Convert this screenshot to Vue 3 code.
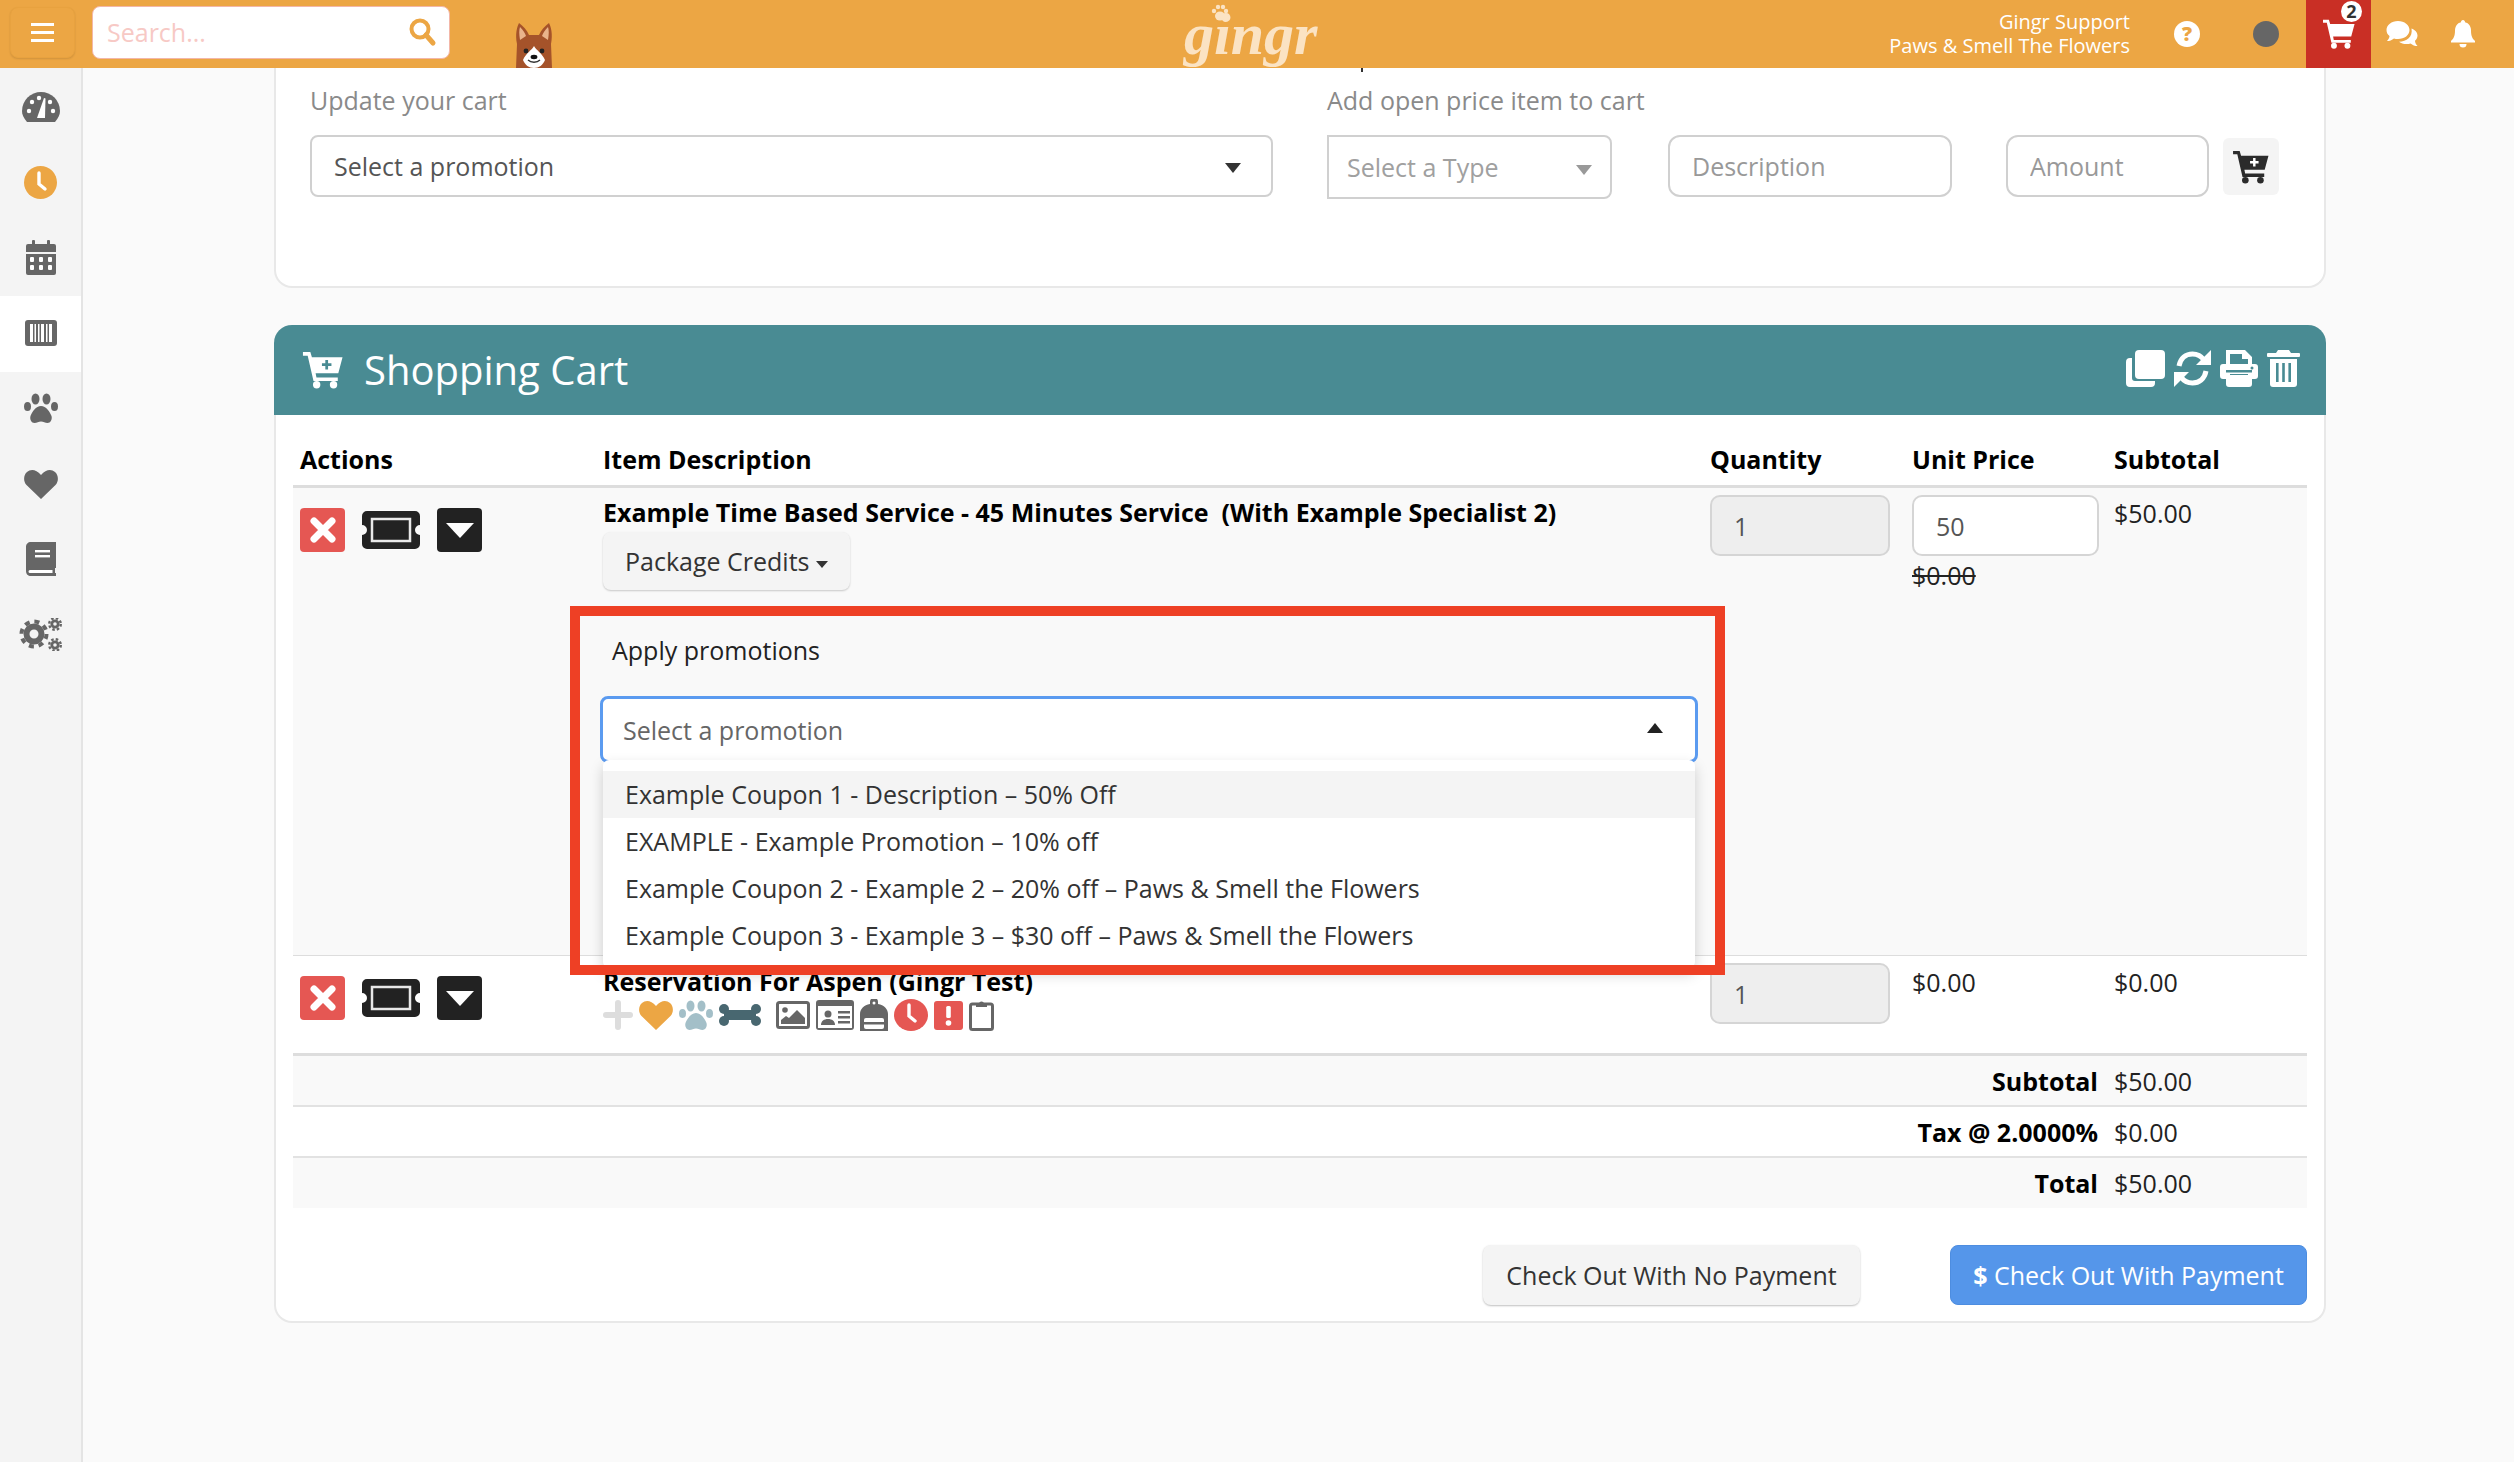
<script setup>
const promos = [
  "Example Coupon 1 - Description – 50% Off",
  "EXAMPLE - Example Promotion – 10% off",
  "Example Coupon 2 - Example 2 – 20% off – Paws & Smell the Flowers",
  "Example Coupon 3 - Example 3 – $30 off – Paws & Smell the Flowers",
];
const totals = [
  { label: "Subtotal", value: "$50.00" },
  { label: "Tax @ 2.0000%", value: "$0.00" },
  { label: "Total", value: "$50.00" },
];
</script>

<template>
  <div class="page">
    <header class="topbar">
      <button class="menu-btn"><i></i><i></i><i></i></button>
      <div class="search">
        <input placeholder="Search..." />
        <svg width="30" height="30" viewBox="0 0 30 30">
          <circle cx="13" cy="12" r="8.5" fill="none" stroke="#eca644" stroke-width="4" />
          <path d="M19 18l7 8" stroke="#eca644" stroke-width="5" stroke-linecap="round" />
        </svg>
      </div>
      <svg class="dog" width="40" height="46" viewBox="0 0 40 46">
        <path d="M3 22C1 12 3 5 5 1c4 3 8 7 10 12h10c2-5 6-9 10-12 2 4 4 11 2 21l1 24H2z" fill="#a5532a" />
        <path d="M6 18C5 12 5 8 6 5c3 3 5 6 6 9zM34 18c1-6 1-10 0-13-3 3-5 6-6 9z" fill="#eab48b" />
        <path d="M20 24c-2 4-8 7-11 14 2 5 6 8 11 8s9-3 11-8c-3-7-9-10-11-14z" fill="#fff" />
        <circle cx="12" cy="29" r="2.4" fill="#222" />
        <circle cx="28" cy="29" r="2.4" fill="#222" />
        <ellipse cx="20" cy="35" rx="3.4" ry="2.2" fill="#111" />
        <path d="M14 38c3 3 9 3 12 0" fill="none" stroke="#333" stroke-width="1.3" />
      </svg>
      <div class="logo">
        <svg class="logo-paw" width="20" height="20" viewBox="0 0 20 20" fill="#fbe3c3">
          <ellipse cx="10" cy="14" rx="5" ry="4.5" />
          <circle cx="4" cy="9" r="2.2" /><circle cx="8" cy="5" r="2.2" /><circle cx="13" cy="5" r="2.2" /><circle cx="16" cy="9" r="2.2" />
        </svg>
        gingr
      </div>
      <div class="top-right">
        <div class="user">
          <div>Gingr Support</div>
          <div>Paws &amp; Smell The Flowers</div>
        </div>
        <div class="help">?</div>
        <div class="status-dot"></div>
        <div class="cart-tab">
          <svg width="32" height="34" viewBox="0 0 38 36">
            <path d="M0 1h7l1.500 5h29l-4 15H12l.8 4H33v3.500H10L4.500 4.500H0z" fill="#fff" />
            <circle cx="13" cy="32" r="3.500" fill="#fff" /><circle cx="29" cy="32" r="3.500" fill="#fff" />
          </svg>
          <span class="badge">2</span>
        </div>
        <svg class="comments" width="32" height="28" viewBox="0 0 32 28" fill="#fff">
          <path d="M12 1c6.500 0 11.500 4 11.500 9s-5 9-11.500 9c-1.500 0-3-.2-4-.6C6 20 3.500 21 1 21c1.500-1.500 2.500-3.500 2.500-5C1.500 14.500.5 12.500.5 10 .5 5 5.500 1 12 1z" />
          <path d="M25.500 8.500c3.500 1.200 6 4 6 7 0 2-1 4-2.500 5.300 0 1.700 1 3.700 2.500 5.200-2.500 0-5-1-7-2.600-1 .4-2.500.6-4 .6-3 0-5.500-.8-7.500-2.300 7.500 0 14-4.500 12.500-13.200z" />
        </svg>
        <svg class="bell" width="24" height="28" viewBox="0 0 24 28" fill="#fff">
          <path d="M12 0c1.300 0 2 1 2 2.200C18 3 20 6.500 20 10.500c0 6 1.500 8 4 10.500v1.500H0V21c2.500-2.500 4-4.500 4-10.500C4 6.500 6 3 10 2.200 10 1 10.700 0 12 0z" />
          <path d="M8.500 24h7a3.500 3.500 0 0 1-7 0z" />
        </svg>
      </div>
    </header>

    <div class="layout">
      <aside class="sidebar">
        <div class="side-item">
          <svg width="38" height="30" viewBox="0 0 38 30">
            <path d="M5 30C1.500 26 0 22.500 0 19a19 19 0 0 1 38 0c0 3.500-1.500 7-5 11z" fill="#666" />
            <circle cx="7" cy="19" r="2.200" fill="#fff" /><circle cx="10" cy="10" r="2.200" fill="#fff" /><circle cx="31" cy="19" r="2.200" fill="#fff" /><circle cx="28" cy="10" r="2.200" fill="#fff" /><circle cx="17" cy="6" r="2.200" fill="#fff" />
            <path d="M15 26l7-20 1.500.5L23 26z" fill="#fff" />
          </svg>
        </div>
        <div class="side-item">
          <svg width="33" height="33" viewBox="0 0 33 33">
            <circle cx="16.500" cy="16.500" r="16.500" fill="#eca644" />
            <path d="M15 7v11l6 5" fill="none" stroke="#fff" stroke-width="3.400" stroke-linecap="round" />
          </svg>
        </div>
        <div class="side-item">
          <svg width="30" height="35" viewBox="0 0 30 35" fill="#666">
            <rect x="6" width="3" height="6" rx="1" /><rect x="21" width="3" height="6" rx="1" />
            <path d="M2 4h26a2 2 0 0 1 2 2v6H0V6a2 2 0 0 1 2-2z" />
            <path d="M0 14h30v19a2 2 0 0 1-2 2H2a2 2 0 0 1-2-2z" />
            <g fill="#fff"><rect x="4" y="17" width="4" height="5" rx="1" /><rect x="13" y="17" width="4" height="5" rx="1" /><rect x="22" y="17" width="4" height="5" rx="1" /><rect x="4" y="25" width="4" height="5" rx="1" /><rect x="13" y="25" width="4" height="5" rx="1" /><rect x="22" y="25" width="4" height="5" rx="1" /></g>
          </svg>
        </div>
        <div class="side-item active">
          <svg width="32" height="26" viewBox="0 0 32 26">
            <rect width="32" height="26" rx="3" fill="#666" />
            <g fill="#fff"><rect x="5" y="4" width="3" height="18" /><rect x="9.500" y="4" width="1.500" height="18" /><rect x="13" y="4" width="1.500" height="18" /><rect x="16" y="4" width="3" height="18" /><rect x="21" y="4" width="1.500" height="18" /><rect x="24" y="4" width="3" height="18" /></g>
          </svg>
        </div>
        <div class="side-item">
          <svg width="34" height="30" viewBox="0 0 34 30" fill="#666">
            <ellipse cx="11.500" cy="6" rx="4" ry="5.500" /><ellipse cx="22.500" cy="6" rx="4" ry="5.500" />
            <ellipse cx="3.500" cy="13.500" rx="3.500" ry="4.500" /><ellipse cx="30.500" cy="13.500" rx="3.500" ry="4.500" />
            <path d="M17 13c5 0 9 6 10.500 10 1 3.500-1 7-4 7-2.500 0-4-1.500-6.500-1.500S13 30 10.500 30c-3 0-5-3.500-4-7C8 19 12 13 17 13z" />
          </svg>
        </div>
        <div class="side-item">
          <svg width="34" height="30" viewBox="0 0 34 30">
            <path d="M17 30L2.500 16C-1 12-.5 6 3 3c3.500-3 9-3 14 3 5-6 10.500-6 14-3 3.500 3 4 9 .5 13z" fill="#666" />
          </svg>
        </div>
        <div class="side-item">
          <svg width="30" height="34" viewBox="0 0 30 34">
            <path d="M5 0h25v26h-1v5h1v3H5c-3 0-5-2-5-5V5c0-3 2-5 5-5z" fill="#666" />
            <path d="M4 28h22.500v3H4a1.500 1.500 0 0 1 0-3z" fill="#fff" />
            <rect x="9" y="8" width="15" height="2.400" fill="#fff" /><rect x="9" y="13" width="15" height="2.400" fill="#fff" />
          </svg>
        </div>
        <div class="side-item">
          <svg width="43" height="33" viewBox="0 0 43 33" fill="none" stroke="#666">
            <circle cx="15" cy="16" r="7.500" stroke-width="6" />
            <circle cx="15" cy="16" r="12.500" stroke-width="4" stroke-dasharray="5 4.820" />
            <circle cx="36" cy="6" r="3.200" stroke-width="2.800" />
            <circle cx="36" cy="6" r="5.800" stroke-width="2.400" stroke-dasharray="2.500 2.060" />
            <circle cx="36" cy="27" r="3.200" stroke-width="2.800" />
            <circle cx="36" cy="27" r="5.800" stroke-width="2.400" stroke-dasharray="2.500 2.060" />
          </svg>
        </div>
      </aside>

      <main class="content">
        <section class="card update-card">
          <div class="promo-col">
            <div class="cut-tick"></div>
            <label class="soft-label">Update your cart</label>
            <div class="select wide">
              <span>Select a promotion</span>
              <i class="caret dark"></i>
            </div>
          </div>
          <div class="open-col">
            <div class="cut-tick shown"></div>
            <label class="soft-label">Add open price item to cart</label>
            <div class="open-fields">
              <div class="select type">
                <span>Select a Type</span>
                <i class="caret"></i>
              </div>
              <input class="field desc" placeholder="Description" />
              <input class="field amount" placeholder="Amount" />
              <button class="add-btn">
                <svg width="38" height="34" viewBox="0 0 38 36">
                  <path d="M0 1h7l1.500 5h29l-4 15H12l.8 4H33v3.500H10L4.500 4.500H0z" fill="#2b2b2b" />
                  <circle cx="13" cy="32" r="3.500" fill="#2b2b2b" /><circle cx="29" cy="32" r="3.500" fill="#2b2b2b" />
                  <path d="M22.500 8.500v9M18 13h9" stroke="#fff" stroke-width="2.600" />
                </svg>
              </button>
            </div>
          </div>
        </section>

        <section class="cart">
          <div class="cart-head">
            <svg width="44" height="38" viewBox="0 0 38 36">
              <path d="M0 1h7l1.500 5h29l-4 15H12l.8 4H33v3.500H10L4.500 4.500H0z" fill="#fff" />
              <circle cx="13" cy="32" r="3.500" fill="#fff" /><circle cx="29" cy="32" r="3.500" fill="#fff" />
              <path d="M22.500 8.500v9M18 13h9" stroke="#498b93" stroke-width="2.600" />
            </svg>
            <h2>Shopping Cart</h2>
            <div class="head-tools">
              <svg width="39" height="37" viewBox="0 0 39 37" fill="#fff">
                <rect x="9" width="30" height="29" rx="4" />
                <path d="M6 8v20a3 3 0 0 0 3 3h20v2a4 4 0 0 1-4 4H4a4 4 0 0 1-4-4V12a4 4 0 0 1 4-4z" />
              </svg>
              <svg width="37" height="37" viewBox="0 0 37 37" fill="none" stroke="#fff" stroke-width="5">
                <path d="M5 16C6.500 8 12 4 18.500 4c5 0 9 2.500 11.500 6" />
                <path d="M32 21c-1.500 8-7 12-13.500 12-5 0-9-2.500-11.500-6" />
                <path d="M37 0v15H22z" fill="#fff" stroke="none" />
                <path d="M0 37V22h15z" fill="#fff" stroke="none" />
              </svg>
              <svg width="38" height="37" viewBox="0 0 38 37" fill="#fff">
                <path d="M6 0h19l7 7v8h-4V9h-6V4H10v11H6z" />
                <path d="M3 14h32a3 3 0 0 1 3 3v9a3 3 0 0 1-3 3h-3v5a3 3 0 0 1-3 3H9a3 3 0 0 1-3-3v-5H3a3 3 0 0 1-3-3v-9a3 3 0 0 1 3-3z" />
                <rect x="10" y="24" width="18" height="9" fill="#498b93" />
                <rect x="10" y="25" width="18" height="8" fill="#fff" />
                <rect x="6" y="20" width="26" height="2.500" fill="#498b93" />
                <circle cx="32" cy="18" r="1.500" fill="#498b93" />
              </svg>
              <svg width="33" height="37" viewBox="0 0 33 37" fill="#fff">
                <path d="M11 0h11l2 3h8a1 1 0 0 1 1 1v2a1 1 0 0 1-1 1H1a1 1 0 0 1-1-1V4a1 1 0 0 1 1-1h8z" />
                <path d="M3 9h27v25a3 3 0 0 1-3 3H6a3 3 0 0 1-3-3z" />
                <g fill="#498b93"><rect x="9" y="13" width="2.600" height="19" /><rect x="15.200" y="13" width="2.600" height="19" /><rect x="21.400" y="13" width="2.600" height="19" /></g>
              </svg>
            </div>
          </div>

          <div class="cart-body">
            <div class="row head-row">
              <div>Actions</div>
              <div>Item Description</div>
              <div>Quantity</div>
              <div>Unit Price</div>
              <div>Subtotal</div>
            </div>

            <div class="row item-row striped first">
              <div class="actions">
                <button class="act red">
                  <svg width="30" height="30" viewBox="0 0 30 30"><path d="M6 6l18 18M24 6L6 24" stroke="#fff" stroke-width="7" stroke-linecap="round" /></svg>
                </button>
                <svg class="ticket" width="58" height="38" viewBox="0 0 58 38">
                  <path d="M5 0h48a5 5 0 0 1 5 5v9a5 5 0 0 0 0 10v9a5 5 0 0 1-5 5H5a5 5 0 0 1-5-5v-9a5 5 0 0 0 0-10V5a5 5 0 0 1 5-5z" fill="#222" />
                  <rect x="10" y="8" width="38" height="22" fill="none" stroke="#e8e8e8" stroke-width="2.500" />
                </svg>
                <button class="act dark"><i></i></button>
              </div>
              <div class="desc-cell">
                <div class="item-title">Example Time Based Service - 45 Minutes Service&nbsp; (With Example Specialist 2)</div>
                <button class="pkg-btn">Package Credits <i class="mini-caret"></i></button>
                <div class="apply-label">Apply promotions</div>
                <div class="promo-select">
                  <span>Select a promotion</span>
                  <i class="caret up"></i>
                  <ul class="promo-menu">
                    <li v-for="(p, i) in promos" :key="p" :class="{ hover: i === 0 }">{{ p }}</li>
                  </ul>
                </div>
              </div>
              <div><input class="qty" value="1" readonly /></div>
              <div>
                <input class="price" value="50" />
                <div class="old-price">$0.00</div>
              </div>
              <div class="sub-val">$50.00</div>
              <div class="annotation"></div>
            </div>

            <div class="row item-row second">
              <div class="actions">
                <button class="act red">
                  <svg width="30" height="30" viewBox="0 0 30 30"><path d="M6 6l18 18M24 6L6 24" stroke="#fff" stroke-width="7" stroke-linecap="round" /></svg>
                </button>
                <svg class="ticket" width="58" height="38" viewBox="0 0 58 38">
                  <path d="M5 0h48a5 5 0 0 1 5 5v9a5 5 0 0 0 0 10v9a5 5 0 0 1-5 5H5a5 5 0 0 1-5-5v-9a5 5 0 0 0 0-10V5a5 5 0 0 1 5-5z" fill="#222" />
                  <rect x="10" y="8" width="38" height="22" fill="none" stroke="#e8e8e8" stroke-width="2.500" />
                </svg>
                <button class="act dark"><i></i></button>
              </div>
              <div class="desc-cell">
                <div class="item-title res">Reservation For Aspen (Gingr Test)</div>
                <div class="res-icons">
                  <svg width="30" height="30" viewBox="0 0 30 30"><path d="M15 3v24M3 15h24" stroke="#ddd" stroke-width="6" stroke-linecap="round" /></svg>
                  <svg width="34" height="30" viewBox="0 0 34 30"><path d="M17 30L2.500 16C-1 12-.5 6 3 3c3.500-3 9-3 14 3 5-6 10.500-6 14-3 3.500 3 4 9 .5 13z" fill="#eca644" /></svg>
                  <svg width="34" height="30" viewBox="0 0 34 30" fill="#a3bfc8">
                    <ellipse cx="11.500" cy="6" rx="4" ry="5.500" /><ellipse cx="22.500" cy="6" rx="4" ry="5.500" />
                    <ellipse cx="3.500" cy="13.500" rx="3.500" ry="4.500" /><ellipse cx="30.500" cy="13.500" rx="3.500" ry="4.500" />
                    <path d="M17 13c5 0 9 6 10.500 10 1 3.500-1 7-4 7-2.500 0-4-1.500-6.500-1.500S13 30 10.500 30c-3 0-5-3.500-4-7C8 19 12 13 17 13z" />
                  </svg>
                  <svg width="42" height="22" viewBox="0 0 42 22" fill="#486770">
                    <circle cx="5" cy="5" r="5" /><circle cx="5" cy="17" r="5" /><circle cx="37" cy="5" r="5" /><circle cx="37" cy="17" r="5" />
                    <rect x="5" y="6" width="32" height="10" />
                  </svg>
                  <svg class="gap-l" width="34" height="28" viewBox="0 0 34 28">
                    <rect x="1.500" y="1.500" width="31" height="25" rx="2" fill="#fff" stroke="#666" stroke-width="3" />
                    <circle cx="9" cy="9" r="2.800" fill="#666" />
                    <path d="M5 23v-4l5-4 3 2 8-8 8 8v6z" fill="#666" />
                  </svg>
                  <svg width="38" height="30" viewBox="0 0 38 30">
                    <rect width="38" height="30" rx="3" fill="#666" />
                    <rect x="2" y="6" width="34" height="22" fill="#fff" />
                    <circle cx="12" cy="14" r="3.500" fill="#666" />
                    <path d="M5 25c0-4 3-6 7-6s7 2 7 6z" fill="#666" />
                    <rect x="22" y="11" width="12" height="2.500" fill="#666" /><rect x="22" y="16" width="12" height="2.500" fill="#666" /><rect x="22" y="21" width="12" height="2.500" fill="#666" />
                  </svg>
                  <svg width="28" height="32" viewBox="0 0 28 32">
                    <path d="M10 3a4 4 0 0 1 8 0v2c6 1 10 5 10 10v17H0V15C0 10 4 6 10 5z" fill="#666" />
                    <circle cx="14" cy="4" r="1.500" fill="#fff" />
                    <rect x="4" y="19" width="20" height="11" rx="2" fill="#fff" />
                    <rect x="4" y="23" width="20" height="2.500" fill="#666" />
                  </svg>
                  <svg width="34" height="32" viewBox="0 0 34 32">
                    <ellipse cx="17" cy="16" rx="17" ry="16" fill="#e55753" />
                    <path d="M15 6v11l6 5" fill="none" stroke="#fff" stroke-width="3.400" stroke-linecap="round" />
                  </svg>
                  <svg width="29" height="29" viewBox="0 0 29 29">
                    <rect width="29" height="29" rx="3" fill="#e55753" />
                    <rect x="12.200" y="5" width="4.600" height="12" rx="1.500" fill="#fff" />
                    <circle cx="14.500" cy="22" r="2.800" fill="#fff" />
                  </svg>
                  <svg width="25" height="32" viewBox="0 0 25 32">
                    <rect x="1.500" y="5" width="22" height="25.500" rx="2" fill="#fff" stroke="#666" stroke-width="3" />
                    <path d="M7 8V5h3a2.500 2.500 0 0 1 5 0h3v3z" fill="#666" />
                  </svg>
                </div>
              </div>
              <div><input class="qty" value="1" readonly /></div>
              <div class="plain-val">$0.00</div>
              <div class="plain-val">$0.00</div>
            </div>

            <div class="totals">
              <div v-for="t in totals" :key="t.label" class="total-row">
                <b>{{ t.label }}</b>
                <span>{{ t.value }}</span>
              </div>
            </div>

            <div class="checkout">
              <button class="pay-none">Check Out With No Payment</button>
              <button class="pay"><b>$</b> Check Out With Payment</button>
            </div>
          </div>
        </section>
      </main>
    </div>
  </div>
</template>

<style>
html, body {
  margin: 0;
  background: #fafafa;
}
</style>

<style scoped>
* {
  box-sizing: border-box;
}
.page {
  width: 2514px;
  height: 1462px;
  overflow: hidden;
  font-family: "Open Sans", "Liberation Sans", sans-serif;
  font-size: 25px;
  color: #222;
  background: #fafafa;
}
button, input {
  font: inherit;
}
.topbar {
  height: 68px;
  display: flex;
  align-items: center;
  background: #eca644;
  padding-left: 10px;
  color: #fff;
}
.menu-btn {
  width: 65px;
  height: 51px;
  margin-bottom: 4px;
  border: 1px solid #e8a23f;
  border-radius: 8px;
  background: #eca644;
  box-shadow: 0 1px 2px rgba(0, 0, 0, 0.12);
  display: flex;
  flex-direction: column;
  align-items: center;
  justify-content: center;
  gap: 5px;
  padding: 0;
}
.menu-btn i {
  width: 23px;
  height: 3px;
  background: #fff;
}
.search {
  width: 358px;
  height: 53px;
  margin-left: 17px;
  margin-bottom: 4px;
  background: #fff;
  border: 1px solid #f3b7a8;
  border-radius: 8px;
  display: flex;
  align-items: center;
  padding: 0 12px;
}
.search input {
  flex: 1;
  min-width: 0;
  border: 0;
  outline: 0;
  background: transparent;
  color: #f7c9c5;
}
.search input::placeholder {
  color: #f7c9c5;
  opacity: 1;
}
.dog {
  align-self: flex-end;
  margin-left: 64px;
}
.logo {
  position: relative;
  margin-left: 630px;
  width: 118px;
  font-family: "Liberation Serif", serif;
  font-style: italic;
  font-weight: 700;
  font-size: 60px;
  line-height: 68px;
  color: #fbe3c3;
}
.logo-paw {
  position: absolute;
  left: 26px;
  top: 2px;
}
.top-right {
  margin-left: auto;
  display: flex;
  align-items: center;
  height: 68px;
  padding-right: 39px;
}
.user {
  text-align: right;
  font-size: 20px;
  line-height: 24px;
  margin-right: 44px;
}
.help {
  width: 26px;
  height: 26px;
  border-radius: 50%;
  background: #fff;
  color: #eca644;
  font-weight: 800;
  font-size: 20px;
  line-height: 26px;
  text-align: center;
}
.status-dot {
  width: 26px;
  height: 26px;
  border-radius: 50%;
  background: #666;
  margin-left: 53px;
}
.cart-tab {
  position: relative;
  width: 65px;
  height: 68px;
  margin-left: 27px;
  background: #c92f25;
  display: flex;
  align-items: center;
  justify-content: center;
}
.badge {
  position: absolute;
  top: 1px;
  right: 9px;
  width: 21px;
  height: 21px;
  border-radius: 50%;
  background: #fff;
  color: #333;
  font-size: 18px;
  font-weight: 700;
  line-height: 21px;
  text-align: center;
}
.comments {
  margin-left: 15px;
}
.bell {
  margin-left: 33px;
}
.layout {
  display: flex;
  height: 1394px;
}
.sidebar {
  width: 83px;
  flex: none;
  background: #f4f4f4;
  border-right: 2px solid #e4e4e4;
  padding-top: 2px;
}
.side-item {
  height: 75.4px;
  display: flex;
  align-items: center;
  justify-content: center;
  padding-bottom: 2px;
}
.side-item.active {
  background: #fff;
}
.content {
  flex: 1;
  padding: 0 188px 0 191px;
}
.card {
  background: #fff;
  border: 2px solid #e8e8e8;
  border-top: 0;
  border-radius: 0 0 18px 18px;
}
.update-card {
  height: 220px;
  display: flex;
  padding-left: 34px;
  color: #8a8a8a;
}
.soft-label {
  display: block;
  line-height: 32px;
}
.cut-tick {
  height: 4px;
  width: 2px;
  margin-bottom: 12px;
}
.cut-tick.shown {
  margin-left: 34px;
  background: #333;
}
.promo-col {
  width: 963px;
}
.open-col {
  margin-left: 54px;
}
.open-fields {
  display: flex;
  align-items: flex-start;
  margin-top: 19px;
}
.select {
  position: relative;
  display: flex;
  align-items: center;
  background: #fff;
  border: 2px solid #d0d0d0;
  border-radius: 8px;
}
.select.wide {
  width: 963px;
  height: 62px;
  margin-top: 19px;
  padding-left: 22px;
  color: #555;
}
.select.type {
  width: 285px;
  height: 64px;
  padding-left: 18px;
  border-radius: 0 8px 8px 0;
  color: #a0a0a0;
}
.caret {
  position: absolute;
  right: 30px;
  top: 26px;
  border: 8px solid transparent;
  border-top: 10px solid #999;
  border-bottom: 0;
}
.caret.dark {
  right: 30px;
  border-top-color: #333;
}
.select.type .caret {
  right: 18px;
  top: 28px;
}
.field {
  height: 62px;
  border: 2px solid #d0d0d0;
  border-radius: 12px;
  background: #fff;
  padding: 0 22px;
  outline: 0;
}
.field::placeholder {
  color: #999;
  opacity: 1;
}
.desc {
  width: 284px;
  margin-left: 56px;
}
.amount {
  width: 203px;
  margin-left: 54px;
}
.add-btn {
  width: 56px;
  height: 57px;
  margin-left: 14px;
  margin-top: 3px;
  background: #f4f4f4;
  border: 0;
  border-radius: 6px;
  padding: 0;
  display: flex;
  align-items: center;
  justify-content: center;
}
.cart {
  margin-top: 37px;
  background: #fff;
  border: 2px solid #e8e8e8;
  border-top: 0;
  border-radius: 18px;
}
.cart-head {
  height: 90px;
  margin: 0 -2px;
  background: #498b93;
  border-radius: 18px 18px 0 0;
  color: #fff;
  display: flex;
  align-items: center;
  padding: 0 26px 0 27px;
}
.cart-head h2 {
  margin: 0 0 0 19px;
  font-size: 40px;
  font-weight: 400;
  line-height: 1;
}
.head-tools {
  margin-left: auto;
  margin-bottom: 4px;
  display: flex;
  gap: 9px;
}
.cart-body {
  padding: 0 17px 16px 17px;
}
.row {
  display: grid;
  grid-template-columns: 303px 1107px 202px 202px 200px;
}
.row > div {
  padding-left: 7px;
}
.head-row {
  height: 73px;
  align-items: end;
  padding-bottom: 9px;
  border-bottom: 3px solid #ddd;
  font-weight: 700;
  color: #000;
}
.item-row {
  position: relative;
  padding-top: 7px;
}
.striped {
  background: #f9f9f9;
}
.first {
  height: 468px;
  border-bottom: 1px solid #ddd;
}
.second {
  height: 100px;
  padding-top: 7px;
  border-bottom: 3px solid #ddd;
}
.actions {
  display: flex;
  align-items: flex-start;
  padding-top: 13px;
}
.act {
  width: 45px;
  height: 44px;
  border: 0;
  border-radius: 4px;
  padding: 0;
  display: flex;
  align-items: center;
  justify-content: center;
}
.act.red {
  background: #e55753;
}
.act.dark {
  background: #222;
}
.act.dark i {
  border: 14px solid transparent;
  border-top: 15px solid #fff;
  border-bottom: 0;
}
.ticket {
  margin: 3px 17px 0;
}
.item-title {
  font-weight: 700;
  color: #000;
  line-height: 35px;
}
.pkg-btn {
  display: block;
  width: 247px;
  height: 58px;
  margin-top: 2px;
  border: 0;
  border-radius: 8px;
  background: #f4f4f4;
  box-shadow: 0 1px 2px rgba(0, 0, 0, 0.2);
  color: #333;
  padding: 0;
}
.mini-caret {
  display: inline-block;
  vertical-align: middle;
  border: 6px solid transparent;
  border-top: 7px solid #333;
  border-bottom: 0;
}
.apply-label {
  margin: 42px 0 0 9px;
  line-height: 36px;
}
.promo-select {
  position: relative;
  width: 1098px;
  height: 67px;
  margin: 28px 0 0 -3px;
  background: #fff;
  border: 3.500px solid #5b9bf0;
  border-radius: 8px;
  display: flex;
  align-items: center;
  padding-left: 20px;
  color: #666;
}
.caret.up {
  top: 24px;
  right: 32px;
  border-top: 0;
  border-bottom: 10px solid #222;
}
.promo-menu {
  position: absolute;
  z-index: 2;
  top: 100%;
  left: 0;
  right: 0;
  margin: 0;
  height: 208px;
  padding: 11px 0 0;
  list-style: none;
  background: #fff;
  border-radius: 6px;
  box-shadow: 0 6px 14px rgba(0, 0, 0, 0.18);
  color: #333;
}
.promo-menu li {
  height: 47px;
  line-height: 47px;
  padding-left: 22px;
}
.promo-menu li.hover {
  background: #f4f4f4;
}
.annotation {
  position: absolute;
  z-index: 3;
  left: 277px;
  top: 118px;
  width: 1155px;
  height: 369px;
  border: 10px solid #ee4025;
  pointer-events: none;
}
.qty, .price {
  display: block;
  height: 61px;
  border: 2px solid #d5d5d5;
  border-radius: 10px;
  padding: 0 22px;
  color: #555;
  outline: 0;
}
.qty {
  width: 180px;
  background: #eee;
}
.price {
  width: 187px;
  background: #fff;
}
.old-price {
  text-decoration: line-through;
  line-height: 34px;
  margin-top: 2px;
}
.sub-val, .plain-val {
  line-height: 36px;
}
.plain-val {
  margin-top: 1px;
}
.res {
  line-height: 36px;
}
.res-icons {
  display: flex;
  align-items: center;
  height: 32px;
  gap: 6px;
}
.gap-l {
  margin-left: 9px;
}
.total-row {
  display: flex;
  justify-content: flex-end;
  align-items: center;
  height: 51px;
  background: #fff;
  border-bottom: 2px solid #e2e2e2;
}
.total-row:nth-child(odd) {
  background: #f9f9f9;
}
.total-row:last-child {
  border-bottom: 0;
  height: 50px;
}
.total-row b {
  color: #000;
}
.total-row span {
  width: 209px;
  padding-left: 16px;
}
.checkout {
  display: flex;
  justify-content: flex-end;
  margin-top: 37px;
  gap: 90px;
}
.pay-none, .pay {
  height: 60px;
  border-radius: 8px;
  padding: 0;
}
.pay-none {
  width: 377px;
  border: 0;
  background: #f4f4f4;
  box-shadow: 0 1px 2px rgba(0, 0, 0, 0.25);
  color: #333;
}
.pay {
  width: 357px;
  border: 1px solid #4d8de0;
  background: #5596ea;
  color: #fff;
}
</style>
